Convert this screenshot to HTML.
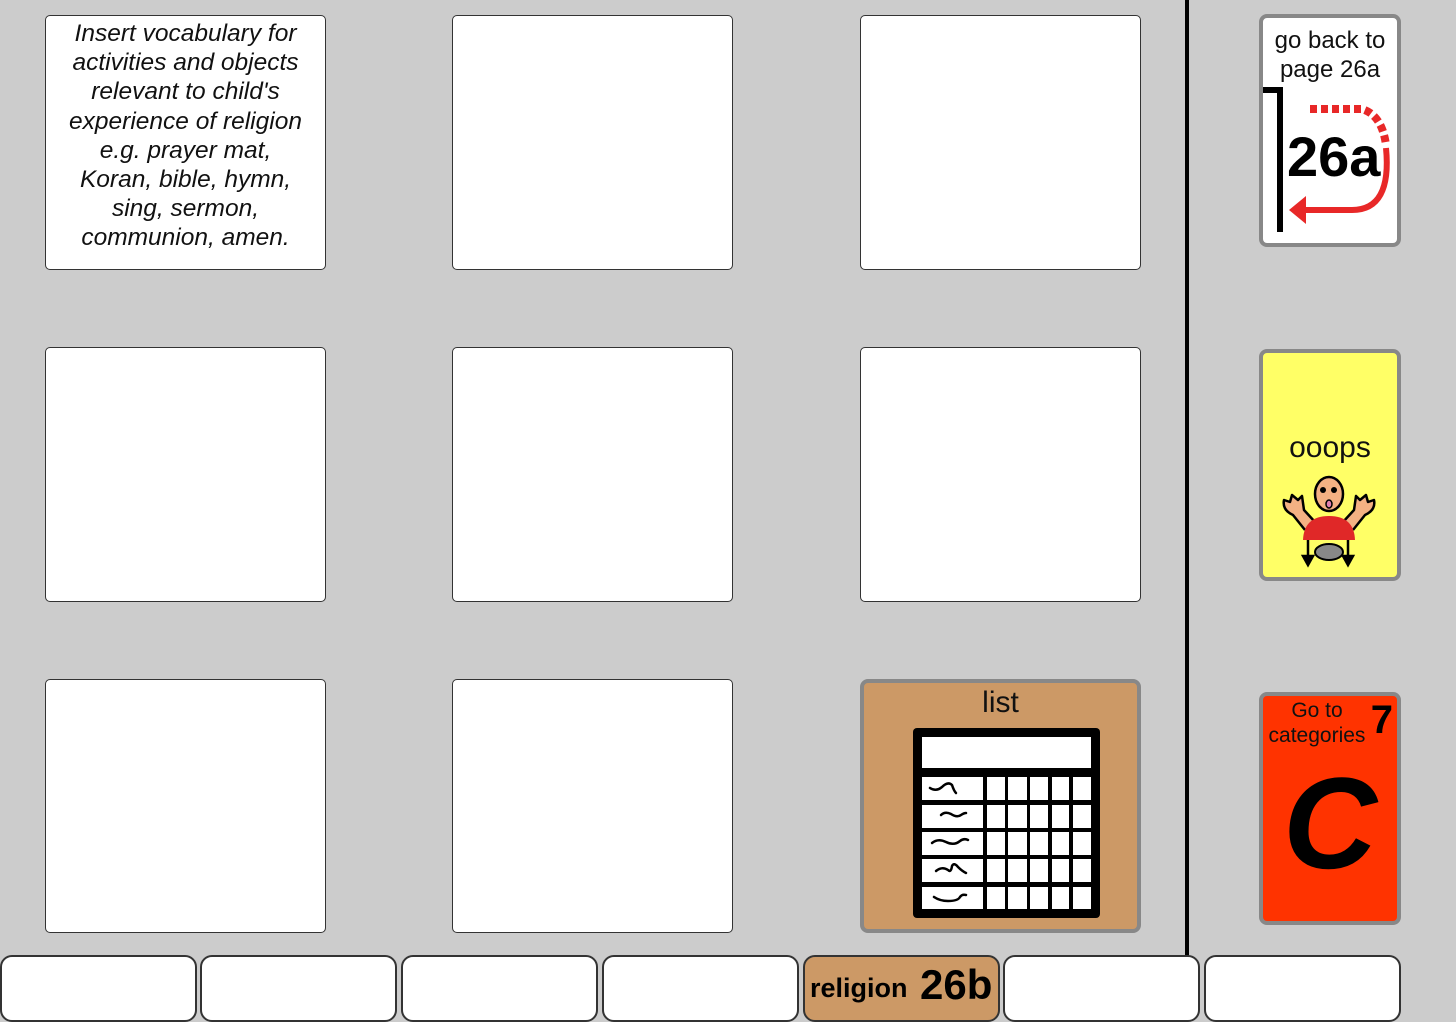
<!DOCTYPE html>
<html><head><meta charset="utf-8"><style>
body{margin:0;width:1456px;height:1022px;background:#cccccc;position:relative;overflow:hidden;font-family:"Liberation Sans",sans-serif}
.c{position:absolute;background:#fff;border:1px solid #333;border-radius:5px;box-sizing:border-box}
.b{position:absolute;background:#fff;border:2px solid #333;border-radius:12px;box-sizing:border-box;top:955px;height:67px}
.r{position:absolute;border:4px solid #888;border-radius:8px;box-sizing:border-box;left:1259px;width:142px}
</style></head><body>
<div class="c" style="left:45px;top:15px;width:281px;height:255px;font-style:italic;font-size:24.5px;line-height:29.2px;text-align:center;padding-top:3px;color:#111;white-space:nowrap">Insert vocabulary for<br>activities and objects<br>relevant to child's<br>experience of religion<br>e.g. prayer mat,<br>Koran, bible, hymn,<br>sing, sermon,<br>communion, amen.</div>
<div class="c" style="left:452px;top:15px;width:281px;height:255px"></div>
<div class="c" style="left:860px;top:15px;width:281px;height:255px"></div>
<div class="c" style="left:45px;top:347px;width:281px;height:255px"></div>
<div class="c" style="left:452px;top:347px;width:281px;height:255px"></div>
<div class="c" style="left:860px;top:347px;width:281px;height:255px"></div>
<div class="c" style="left:45px;top:679px;width:281px;height:254px"></div>
<div class="c" style="left:452px;top:679px;width:281px;height:254px"></div>
<div style="position:absolute;left:860px;top:679px;width:281px;height:254px;background:#cc9966;border:4px solid #888;border-radius:8px;box-sizing:border-box">
<div style="position:absolute;top:3px;width:100%;text-align:center;font-size:30px;color:#111">list</div></div>
<svg style="position:absolute;left:0;top:0" width="1456" height="1022">
<rect x="913" y="728" width="187" height="190" rx="4" fill="#000"/>
<rect x="922" y="737" width="169" height="31" fill="#fff"/>
<g fill="#fff">
<rect x="922" y="777" width="61" height="23"/><rect x="922" y="805" width="61" height="23"/><rect x="922" y="832" width="61" height="23"/><rect x="922" y="859" width="61" height="23"/><rect x="922" y="887" width="61" height="22"/>
</g>
<g fill="#fff">
<rect x="987" y="777" width="18" height="23"/><rect x="1008" y="777" width="19" height="23"/><rect x="1030" y="777" width="18" height="23"/><rect x="1052" y="777" width="17" height="23"/><rect x="1073" y="777" width="18" height="23"/>
<rect x="987" y="805" width="18" height="23"/><rect x="1008" y="805" width="19" height="23"/><rect x="1030" y="805" width="18" height="23"/><rect x="1052" y="805" width="17" height="23"/><rect x="1073" y="805" width="18" height="23"/>
<rect x="987" y="832" width="18" height="23"/><rect x="1008" y="832" width="19" height="23"/><rect x="1030" y="832" width="18" height="23"/><rect x="1052" y="832" width="17" height="23"/><rect x="1073" y="832" width="18" height="23"/>
<rect x="987" y="859" width="18" height="23"/><rect x="1008" y="859" width="19" height="23"/><rect x="1030" y="859" width="18" height="23"/><rect x="1052" y="859" width="17" height="23"/><rect x="1073" y="859" width="18" height="23"/>
<rect x="987" y="887" width="18" height="22"/><rect x="1008" y="887" width="19" height="22"/><rect x="1030" y="887" width="18" height="22"/><rect x="1052" y="887" width="17" height="22"/><rect x="1073" y="887" width="18" height="22"/>
</g>
<g fill="none" stroke="#000" stroke-width="2.5" stroke-linecap="round">
<path d="M930 788 q6 4 12 -1 q6 -6 10 -2 q2 6 4 8"/>
<path d="M941 815 q4 -4 10 -1 q6 4 10 1 q3 -2 5 -2"/>
<path d="M932 843 q6 -5 14 -1 q8 4 14 -1 q4 -3 8 -1"/>
<path d="M936 871 q6 -5 12 -1 q3 3 4 -4 q2 -4 6 1 q4 4 8 6"/>
<path d="M934 897 q6 4 14 4 q10 0 12 -4 q2 -3 6 -2"/>
</g>
</svg>
<div style="position:absolute;left:1185px;top:0;width:4px;height:956px;background:#000"></div>
<div class="r" style="top:14px;height:233px;background:#fff">
<div style="position:absolute;top:8px;width:100%;text-align:center;font-size:24px;line-height:29px;color:#111">go back to<br>page 26a</div></div>
<svg style="position:absolute;left:0;top:0" width="1456" height="1022">
<path d="M1263 90 H1280 V232" fill="none" stroke="#000" stroke-width="6"/>
<text x="1287" y="176" font-family="Liberation Sans" font-weight="bold" font-size="56">26a</text>
<path d="M1310 109 H1362 Q1382 115 1386 145" fill="none" stroke="#e82828" stroke-width="8" stroke-dasharray="7 4"/>
<path d="M1386 148 Q1392 210 1352 210 H1302" fill="none" stroke="#e82828" stroke-width="6"/>
<path d="M1289 210 L1306 196 L1306 224 Z" fill="#e82828"/>
</svg>
<div class="r" style="top:349px;height:232px;background:#ffff66">
<div style="position:absolute;top:78px;width:100%;text-align:center;font-size:30px;color:#111">ooops</div></div>
<svg style="position:absolute;left:0;top:0" width="1456" height="1022">
<g stroke="#000" stroke-width="2.5" fill="#f4b183" stroke-linejoin="round">
<path d="M1305 530 L1293 515 Q1282 510 1284 500 L1290 502 L1292 495 L1298 500 L1302 496 L1304 510 L1315 522"/>
<path d="M1353 530 L1365 515 Q1376 510 1374 500 L1368 502 L1366 495 L1360 500 L1356 496 L1354 510 L1343 522"/>
<path d="M1303 540 Q1304 516 1329 516 Q1354 516 1355 540 Z" fill="#e02828" stroke="none"/>
<ellipse cx="1329" cy="494" rx="14" ry="17"/>
</g>
<circle cx="1323" cy="490" r="3" fill="#000"/><circle cx="1334" cy="490" r="3" fill="#000"/>
<ellipse cx="1329" cy="504" rx="3" ry="4" fill="#e080b0" stroke="#000" stroke-width="1.5"/>
<ellipse cx="1329" cy="552" rx="14" ry="8" fill="#888" stroke="#000" stroke-width="2"/>
<g stroke="#000" stroke-width="2.5" fill="#000">
<path d="M1308 540 V560"/><path d="M1303 556 L1308 565 L1313 556Z"/>
<path d="M1348 540 V560"/><path d="M1343 556 L1348 565 L1353 556Z"/>
</g>
</svg>
<div class="r" style="top:692px;height:233px;background:#ff3300">
<div style="position:absolute;left:2px;top:2px;width:104px;text-align:center;font-size:21px;line-height:25px;color:#111">Go to<br>categories</div>
<div style="position:absolute;right:4px;top:2px;font-size:40px;font-weight:bold">7</div>
<div style="position:absolute;left:0;top:62px;width:100%;text-align:center;font-size:130px;font-weight:bold;font-style:italic;line-height:1">C</div></div>
<div class="b" style="left:0;width:197px"></div>
<div class="b" style="left:200px;width:197px"></div>
<div class="b" style="left:401px;width:197px"></div>
<div class="b" style="left:602px;width:197px"></div>
<div class="b" style="left:803px;width:197px;background:#cc9966;font-weight:bold;white-space:nowrap"><span style="position:absolute;left:5px;top:16px;font-size:27px">religion</span><span style="position:absolute;left:115px;top:4px;font-size:42px">26b</span></div>
<div class="b" style="left:1003px;width:197px"></div>
<div class="b" style="left:1204px;width:197px"></div>
</body></html>
